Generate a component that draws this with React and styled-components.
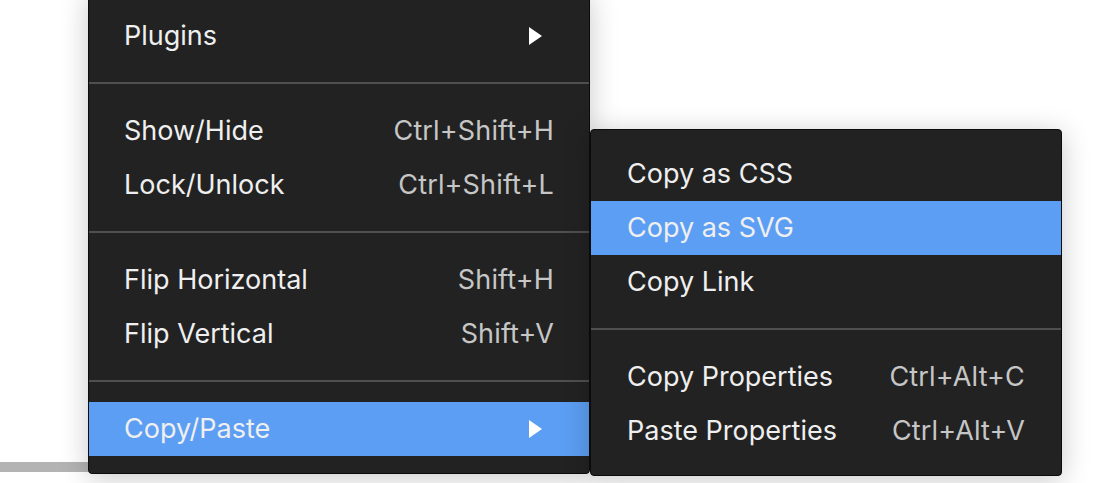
import React from "react";
import styled, { createGlobalStyle } from "styled-components";

const Global = createGlobalStyle`
  html, body { margin: 0; padding: 0; background: #ffffff; }
  body { font-family: Inter, "Noto Sans", "Liberation Sans", sans-serif; overflow: hidden; }
`;

const Canvas = styled.div`
  position: relative;
  width: 1098px;
  height: 483px;
  overflow: hidden;
  background: #ffffff;
  display: flex;
  flex-direction: column;
  justify-content: flex-end;
  padding-bottom: 11px;
  box-sizing: border-box;
`;

const ScrollBar = styled.div`
  width: 300px;
  height: 10px;
  background: #b3b3b3;
`;

const Menu = styled.div`
  position: absolute;
  left: ${(p) => p.$left}px;
  top: ${(p) => p.$top}px;
  width: ${(p) => p.$width}px;
  box-sizing: border-box;
  background: #222222;
  border: 1px solid #0c0c0c;
  border-radius: 4px;
  padding: 17px 0;
  box-shadow: 0 4px 28px rgba(0, 0, 0, 0.22);
  display: flex;
  flex-direction: column;
`;

const Row = styled.div`
  height: 54px;
  display: flex;
  align-items: center;
  justify-content: space-between;
  padding: 0 ${(p) => p.$pad}px;
  background: ${(p) => (p.$active ? "#5c9ef3" : "transparent")};
  color: #efefef;
  font-size: 27px;
`;

const Label = styled.span`
  white-space: nowrap;
  margin-top: -1px;
`;

const Shortcut = styled.span`
  color: #c6c6c6;
  white-space: nowrap;
  letter-spacing: 0.15px;
  margin-top: -1px;
`;

const Arrow = styled.svg`
  width: 13px;
  height: 18px;
  margin-right: 12px;
  display: block;
`;

const Separator = styled.div`
  height: 2px;
  background: #4f4f4f;
  margin: 19px 0 20px;
`;

const SubArrow = () => (
  <Arrow viewBox="0 0 13 18">
    <polygon points="0,0 13,9 0,18" fill="#ffffff" />
  </Arrow>
);

const Item = ({ label, shortcut, submenu, active, pad = 36 }) => (
  <Row $active={active} $pad={pad}>
    <Label>{label}</Label>
    {shortcut && <Shortcut>{shortcut}</Shortcut>}
    {submenu && <SubArrow />}
  </Row>
);

export default function App() {
  return (
    <>
      <Global />
      <Canvas>
        <ScrollBar />
        <Menu $left={88} $top={-9} $width={502}>
          <Item pad={35} label="Plugins" submenu />
          <Separator />
          <Item pad={35} label="Show/Hide" shortcut="Ctrl+Shift+H" />
          <Item pad={35} label="Lock/Unlock" shortcut="Ctrl+Shift+L" />
          <Separator />
          <Item pad={35} label="Flip Horizontal" shortcut="Shift+H" />
          <Item pad={35} label="Flip Vertical" shortcut="Shift+V" />
          <Separator />
          <Item pad={35} label="Copy/Paste" submenu active />
        </Menu>
        <Menu $left={590} $top={129} $width={472}>
          <Item label="Copy as CSS" />
          <Item label="Copy as SVG" active />
          <Item label="Copy Link" />
          <Separator />
          <Item label="Copy Properties" shortcut="Ctrl+Alt+C" />
          <Item label="Paste Properties" shortcut="Ctrl+Alt+V" />
        </Menu>
      </Canvas>
    </>
  );
}
